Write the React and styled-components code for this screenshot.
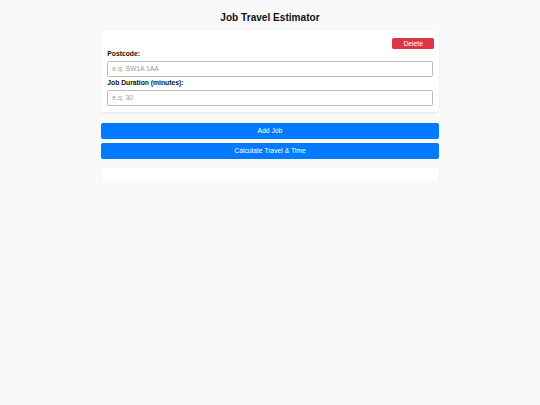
import React from "react";
import styled, { createGlobalStyle } from "styled-components";

const Global = createGlobalStyle`
  html, body { margin: 0; padding: 0; background: #f9f9f9; }
  body { font-family: "Liberation Sans", Arial, sans-serif; color: #000; }
  * { box-sizing: border-box; }
`;

const Page = styled.div`
  width: 338px;
  margin: 0 auto;
  padding-top: 10.5px;
`;

const Title = styled.h1`
  margin: 0 0 6px;
  font-size: 10.1px;
  line-height: 13px;
  font-weight: 700;
  text-align: center;
  color: #111;
`;

const Card = styled.div`
  background: #fff;
  border-radius: 3px;
  box-shadow: 0 0.5px 2px rgba(0, 0, 0, 0.08);
  padding: ${(p) => p.$pad || "8.4px 6.3px 6.8px"};
  min-height: ${(p) => p.$minH || "auto"};
`;

const TopRow = styled.div`
  display: flex;
  justify-content: flex-end;
  margin-right: -1.3px;
`;

const DeleteButton = styled.button`
  width: 41.7px;
  height: 11.6px;
  border: none;
  border-radius: 1.7px;
  background: #dc3545;
  color: #fff;
  font-family: inherit;
  font-size: 6.75px;
  padding: 0;
`;

const Label = styled.label`
  display: block;
  font-size: 6.75px;
  font-weight: 700;
  line-height: 8px;
  margin-top: ${(p) => p.$mt || "2px"};
  margin-bottom: 3px;
  color: #111;
`;

const Input = styled.input`
  display: block;
  width: 100%;
  height: 15.8px;
  border: 0.6px solid #bbb;
  border-radius: 1.7px;
  padding: 0 4px;
  font-family: inherit;
  font-size: 6.75px;
  color: #333;
  background: #fff;
  outline: none;
  &::placeholder { color: #999; }
`;

const Actions = styled.div`
  display: flex;
  flex-direction: column;
  gap: 4.2px;
  margin: 10.3px 0 8.4px;
`;

const PrimaryButton = styled.button`
  width: 100%;
  height: 15.9px;
  border: none;
  border-radius: 2px;
  background: #007bff;
  color: #fff;
  font-family: inherit;
  font-size: 6.75px;
  padding: 0;
`;

export default function App() {
  return (
    <>
      <Global />
      <Page>
        <Title>Job Travel Estimator</Title>
        <Card>
          <TopRow>
            <DeleteButton>Delete</DeleteButton>
          </TopRow>
          <Label $mt="0.6px">Postcode:</Label>
          <Input placeholder="e.g. SW1A 1AA" />
          <Label $mt="2px">Job Duration (minutes):</Label>
          <Input placeholder="e.g. 30" />
        </Card>
        <Actions>
          <PrimaryButton>Add Job</PrimaryButton>
          <PrimaryButton>Calculate Travel &amp; Time</PrimaryButton>
        </Actions>
        <Card $pad="0" $minH="13px" />
      </Page>
    </>
  );
}
